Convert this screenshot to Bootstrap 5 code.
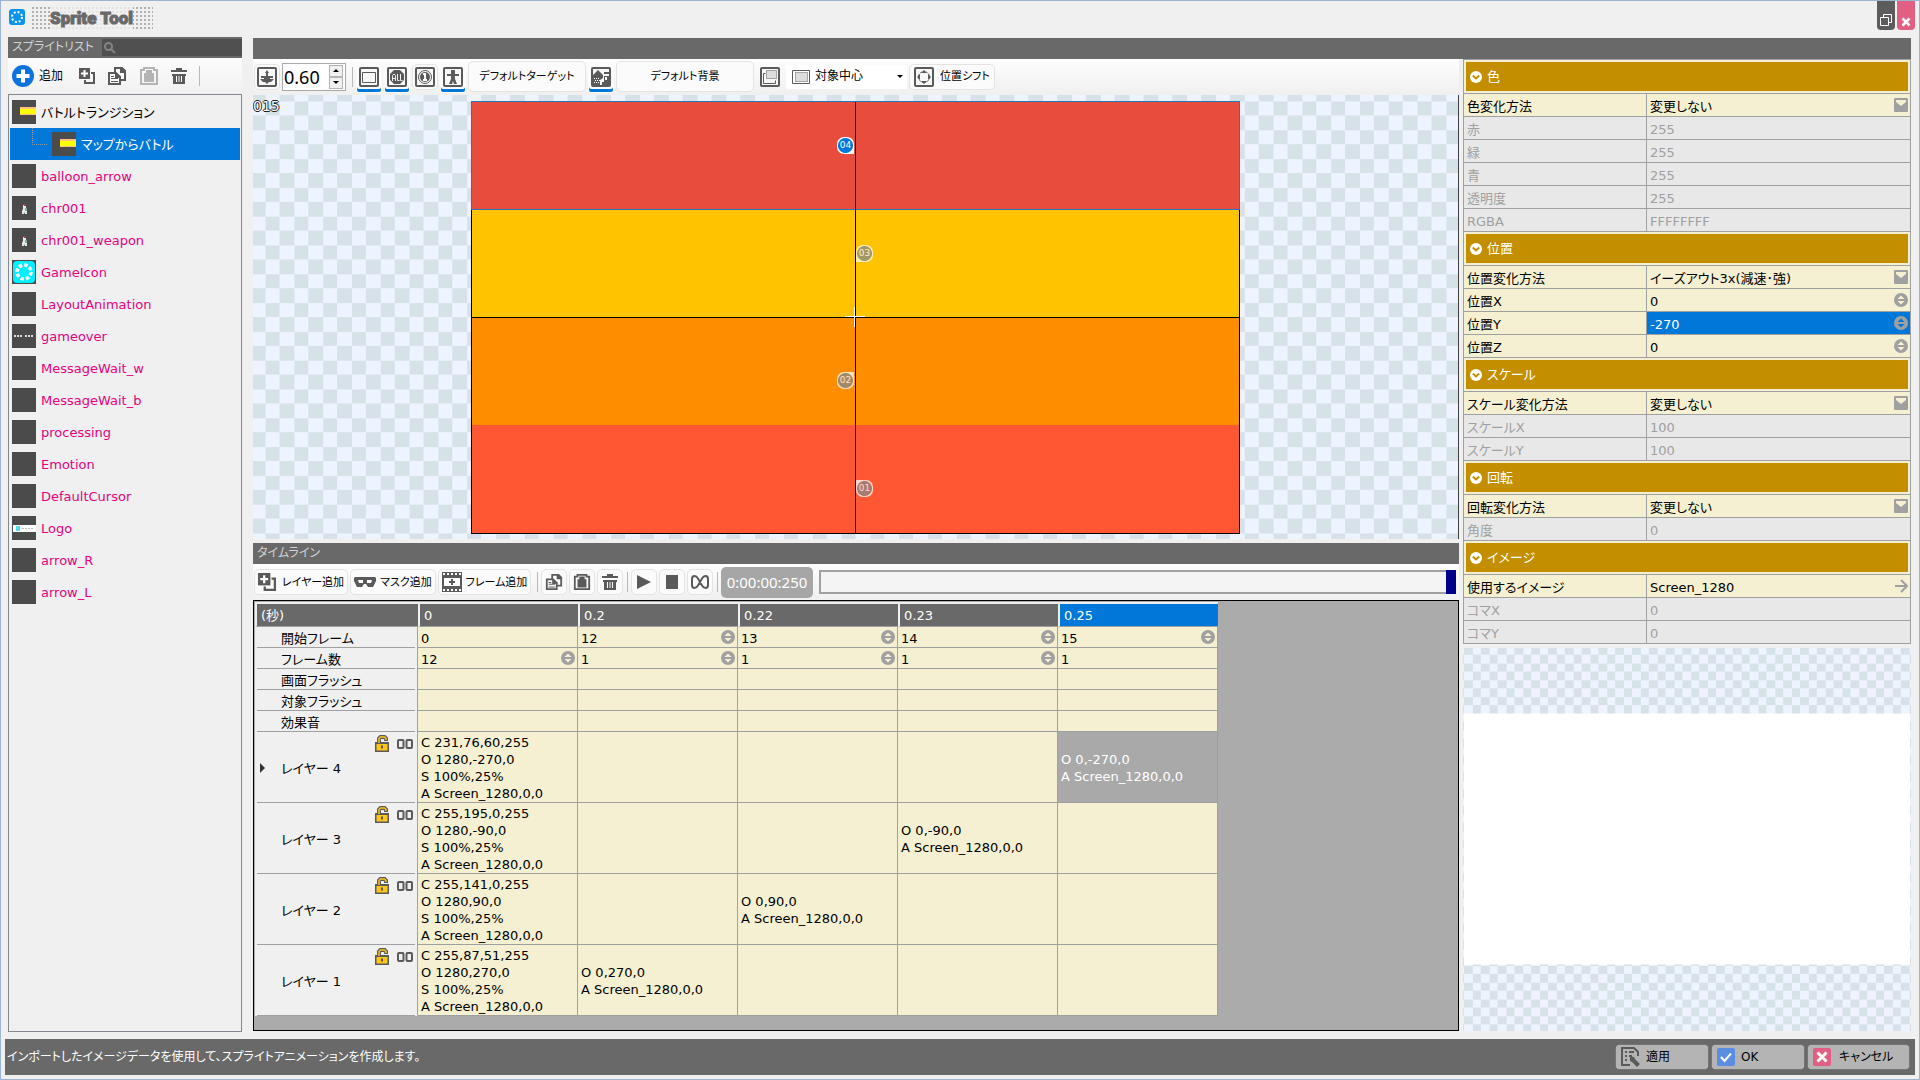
<!DOCTYPE html>
<html lang="ja">
<head>
<meta charset="utf-8">
<meta name="viewport" content="width=device-width, initial-scale=1">
<title>Sprite Tool</title>
<link href="https://cdn.jsdelivr.net/npm/bootstrap@5.3.0/dist/css/bootstrap.min.css" rel="stylesheet">
<style>
:root{--ink:#5a5a5a;--bar:#696969;--line:#a0a0a0;--cream:#f5f0d2;--sel:#0078d9;--gold:#c38f00;--pane:#f0f0f0}
body{background:var(--pane);color:#000;font-family:"DejaVu Sans","Noto Sans CJK JP",sans-serif;font-size:13px;line-height:17px;font-feature-settings:"palt"}
svg{display:block;flex:none}
button,input,select{font:inherit;color:inherit;font-feature-settings:inherit}
.app-window{border:1px solid #9ab4d2;height:100vh;min-height:900px}
.title-bar{height:36px;padding:0 4px 0 8px}
.app-logo{margin-top:8px}
.title-dots{height:23px;width:123px;margin:6px 0 0 5px;background:conic-gradient(#b0b0b0 25%,transparent 0) 0 0/4px 4px}
.title-text{font:900 17px/23px Roboto,sans-serif;color:var(--bar);margin:0;-webkit-text-stroke:1px var(--bar);background:rgba(240,240,240,.8);height:23px}
.win-btn{width:18px;height:29px;border:0;border-radius:0 0 4px 4px;padding:0}
.win-restore{background:#5c5c5c;margin-right:2px}
.win-close{background:#e05f83}
.work-area{padding:0 8px 7px 7px;gap:11px;min-height:0}
.side-panel{width:234px;flex:none}
.main-col{min-width:0;padding:1px 0}
.bar-strip{background:var(--bar);color:#d2d2d2;height:21px;flex:none;padding-left:4px;font-size:12px}
.search-box{background:#505050;height:17px;width:140px;padding-left:2px}
.search-box input{background:none;border:0;min-width:0;outline:0}
.tool-strip{background:linear-gradient(#fdfdfd,#f0f0f0);flex:none;gap:2px;padding-left:1px;height:36px}
.tool-btn{border:1px solid #e4e4e4;border-radius:5px;background:#fbfbfb;padding:0;height:26px;min-width:26px;color:#000;display:flex;align-items:center;justify-content:center;gap:6px;font-size:11px;white-space:nowrap}
.tool-btn:hover{background:#eef4fb}
.tool-on{box-shadow:inset 0 -3px 0 var(--sel);border-radius:3px;border-color:transparent;height:29px;padding-bottom:3px;margin-top:3px}
.tool-label{height:31px}
.flat-btn{border:0;background:none;padding:0;display:flex;align-items:center;gap:5px;font-size:12px}
.v-rule{width:1px;height:20px;background:#b8b8b8;flex:none;margin:0 1px 0 2px}
.sprite-list{border:1px solid #828790;padding:1px;margin:0;list-style:none;overflow:auto}
.sprite-list a{display:flex;align-items:center;height:32px;padding:0 0 0 2px;gap:5px;color:#e6007e;text-decoration:none}
.sprite-list a.plain{color:#000}
.sprite-list a.picked{background:var(--sel);color:#fff}
.thumb{width:24px;height:24px;background:#4b4b4b;flex:none}
.zoom-field{width:64px;height:28px;border:1px solid #a8a8a8;background:#fff;margin-right:2px}
.zoom-field input{border:0;outline:0;width:46px;padding:0 0 0 1px;font:18px/22px "Noto Sans",sans-serif}
.spin-stack button{width:14px;height:12px;border:1px solid #b4b4b4;background:#efefef;padding:0;display:flex;align-items:center;justify-content:center}
.anchor-pick{width:121px;height:24px;padding:0 4px 0 6px;gap:5px;font-size:12px}
.anchor-pick select{appearance:none}
.canvas-area{height:444px;flex:none;border-right:1px solid #404040;margin-top:1px;overflow:hidden;padding-top:6px}
.backdrop{position:absolute;left:0;top:0;width:100%;height:100%}
.stage{position:relative;width:769px;height:433px;border:1px solid #000;border-top:0}
.band{flex:1 1 0}
.band-4{background:#e74c3c;outline:1px solid #1f78c0;flex:0 0 107px;margin-top:1px;position:relative}
.band-3{background:#ffc300}.band-2{background:#ff8d00}.band-1{background:#ff5733}
.axis-v{position:absolute;left:383px;top:1px;bottom:0;width:1px;background:#000}
.axis-h{position:absolute;top:216px;left:0;right:0;height:1px;background:#000}
.origin{position:absolute;left:373px;top:206px}
.pin{position:absolute;width:17px;height:17px;border-radius:7px;background:radial-gradient(circle,var(--sel) 7px,#fff 8px);color:#fff;font-size:9px;line-height:17px;text-align:center}
.pin-l{left:365px}.pin-r{left:384px}
.pin-off{background:radial-gradient(circle,#888 7px,#fff 8px);opacity:.75}
.frame-no{position:absolute;left:0;top:2px;color:#fff;font-size:14px;line-height:18px;text-shadow:1px 0 #222,-1px 0 #222,0 1px #222,0 -1px #222}
.time-box{background:#a6a6a6;color:#fff;border-radius:5px;height:31px;width:92px;font:15px/31px "Noto Sans",sans-serif;text-align:center;flex:none}
.seek{appearance:none;-webkit-appearance:none;height:24px;background:#f4f4f4;box-shadow:inset 0 0 0 2px var(--line);margin:0 3px 0 4px;min-width:0}
.seek::-webkit-slider-thumb{-webkit-appearance:none;width:10px;height:24px;background:#00008b}
.grid-pane{border:1px solid #000;background:#ababab;overflow:auto;min-height:0;padding:1px 0 0 1px}
.frame-table{table-layout:fixed;border-collapse:separate;border-spacing:0;width:963px;background:var(--cream)}
.frame-table col.names{width:163px}
.frame-table thead th{background:var(--bar);color:#fff;font-weight:400;height:25px;border-left:2px solid #f0f0f0;border-bottom:1px solid var(--line);border-top:2px solid #f0f0f0;padding:0 0 0 4px}
.frame-table thead th.now{background:var(--sel)}
.frame-table tbody th{background:var(--pane);font-weight:400;padding:0 2px 0 2px;border-right:1px solid var(--line)}
.frame-table tbody th>div{border-bottom:1px solid var(--line);padding-left:24px;height:21px;line-height:23px}
.frame-table tbody td{border-right:1px solid var(--line);border-bottom:1px solid var(--line);padding:0 2px 0 3px;height:21px}
.frame-table input{border:0;background:none;outline:0;padding:2px 0 0;min-width:0;height:20px}
.frame-table .layer-row td{height:71px;white-space:nowrap;padding-top:2px}
.frame-table .layer-row th>div{height:71px;line-height:73px;position:relative}
.frame-table td.now{background:#a9a9a9;color:#fff}
.layer-tools{position:absolute;right:2px;top:3px}
.row-mark{position:absolute;left:3px;top:31px}
.prop-panel{width:448px;flex:none}
.prop-grid{border:1px solid var(--line);background:var(--cream);border-bottom:0;margin-bottom:4px}
.prop-head{border:2px solid var(--cream);background:var(--gold);color:#fff;width:100%;height:33px;padding:0 0 0 4px;display:flex;align-items:center;gap:5px}
.prop-box{border-bottom:1px solid var(--line)}
.prop-row{display:flex;height:23px;border-bottom:1px solid var(--line)}
.prop-row label{width:183px;border-right:1px solid var(--line);padding:2px 0 0 3px;line-height:21px;flex:none}
.prop-val{display:flex;flex:1;align-items:center;padding:0 2px 0 3px;min-width:0}
.prop-val input,.prop-val select{border:0;background:none;appearance:none;-webkit-appearance:none;outline:0;padding:2px 0 0;flex:1;min-width:0;height:22px}
.prop-off{background:#e8e8e8;color:#a0a0a0}
.prop-val input:disabled{color:#a0a0a0}
.prop-sel{background:var(--sel);color:#fff}
.status-bar{background:var(--bar);color:#fff;margin:0 4px 4px;height:36px;flex:none;font-size:12px;padding:0 6px 0 2px;gap:4px}
.act-btn{height:24px;width:92px;border:0;border-radius:4px;background:#b4b4b4;color:#000;display:flex;align-items:center;padding:0 5px;gap:6px;box-shadow:0 0 1px #ddd}
.act-wide{width:101px;gap:8px}
</style>
</head>
<body>
<svg width="0" height="0" class="position-absolute" aria-hidden="true">
<defs>
<pattern id="checkBig" width="48" height="48" patternUnits="userSpaceOnUse" patternTransform="scale(.6)" shape-rendering="crispEdges"><rect width="48" height="48" fill="#eef4ff"/><path fill="#d6e1e8" d="M0 0h24v24H0zM24 24h24v24H24z"/></pattern>
<pattern id="checkSmall" width="48" height="48" patternUnits="userSpaceOnUse" patternTransform="scale(.35)" shape-rendering="crispEdges"><rect width="48" height="48" fill="#eef4ff"/><path fill="#d6e1e8" d="M24 0h24v24H24zM0 24h24v24H0z"/></pattern>
<symbol id="i-copyadd" viewBox="0 0 16 16"><path fill="#5a5a5a" d="M0 0h11v11H0z"/><path fill="#fff" d="M4.500 2h2v2.500H9v2H6.500V9h-2V6.500H2v-2h2.500z"/><path fill="#5a5a5a" d="M12 4h4v12H5v-4h2v2h7V6h-2z"/></symbol>
<symbol id="i-copy" viewBox="0 0 20 20"><path fill="#fbfbfb" stroke="#5a5a5a" stroke-width="2" d="M8 8V2h7l3 3v9h-5"/><path fill="#5a5a5a" d="M13 1h2l4 4v2h-6z"/><path fill="#fbfbfb" stroke="#5a5a5a" stroke-width="2" d="M2 7h7l4 4v7H2z"/><path fill="#5a5a5a" d="M8 6l6 5v1H8zM4 10h3v1H4zM4 12h7v1H4zM4 15h7v1H4z"/></symbol>
<symbol id="i-paste" viewBox="0 0 20 20"><path fill="none" stroke="currentColor" stroke-width="2" d="M2 4h3V2h10v2h3v14H2z"/><path fill="currentColor" d="M5 7h2V4h6v3h2v9H5z"/></symbol>
<symbol id="i-trash" viewBox="0 0 16 16"><path fill="#5a5a5a" d="M5 0h6v2h5v2H0V2h5zM1 6h14v2h-1v8H2V8H1z"/><path stroke="#fbfbfb" d="M5.500 8v6M8 8v6M10.500 8v6"/></symbol>
<symbol id="i-frame" viewBox="0 0 20 20"><rect x="1" y="1" width="18" height="18" rx="1" fill="#f8f8f8" stroke="#5a5a5a" stroke-width="2"/></symbol>
<symbol id="i-spin" viewBox="0 0 14 14"><circle cx="7" cy="7" r="7" fill="#a0a0a0"/><path fill="#f5f0d2" d="M7 2.500L10.500 6h-7zM3.500 8h7L7 11.500z"/></symbol>
<symbol id="i-spin-sel" viewBox="0 0 14 14"><circle cx="7" cy="7" r="7" fill="#a0a0a0"/><path fill="#0078d9" d="M7 2.500L10.500 6h-7zM3.500 8h7L7 11.500z"/></symbol>
<symbol id="i-drop" viewBox="0 0 14 14"><rect width="14" height="14" rx="1" fill="#a0a0a0"/><path fill="#f5f0d2" d="M2 2h10v2L7 8 2 4z"/></symbol>
<symbol id="i-fold" viewBox="0 0 12 12"><circle cx="6" cy="6" r="6" fill="#fff"/><path d="M2.800 4.500L6 7.500l3.200-3" fill="none" stroke="#c38f00" stroke-width="2"/></symbol>
<symbol id="i-lock" viewBox="0 0 14 17"><path fill="none" stroke="#5a5a5a" stroke-width="4" d="M4 9V3.500L5.500 2h4L11 3.500V6"/><path fill="#5a5a5a" d="M0 7h14v10H0z"/><path fill="none" stroke="#ffc51c" stroke-width="1.500" d="M4 8V3.500L5.500 2h4L11 3.500V5"/><path fill="#ffc51c" d="M1.500 9h11v6.500h-11z"/><path fill="#5a5a5a" d="M6 10.500h2v3H6z"/></symbol>
<symbol id="i-link" viewBox="0 0 16 10"><rect x="1" y="1" width="5.500" height="8" rx="1" fill="none" stroke="#5a5a5a" stroke-width="2"/><rect x="9.500" y="1" width="5.500" height="8" rx="1" fill="none" stroke="#5a5a5a" stroke-width="2"/><path fill="#f0f0f0" d="M3 4h1v2H3zM11 4h1v2h-1z"/></symbol>
<symbol id="i-mini" viewBox="0 0 24 24"><path fill="#ffc080" d="M8 7h16v8H8z"/><path fill="#ff0" d="M8 9h16v5H8z"/></symbol>
<symbol id="i-chr" viewBox="0 0 24 24"><path fill="#e8e8e8" d="M11 9h3v3l1 2v4h-2v-2l-1 2h-2v-3l1-2z"/><path fill="#a04040" d="M12 8h2v2h-2z"/><path fill="#7aa" d="M13 12h2v3h-2z"/></symbol>
</defs>
</svg>

<div class="app-window d-flex flex-column">
<header class="title-bar d-flex align-items-start">
 <svg class="app-logo" width="16" height="16" viewBox="0 0 16 16"><rect width="16" height="16" rx="3" fill="#0a94f0"/><circle cx="8" cy="8" r="5" fill="none" stroke="#fff" stroke-width="2" stroke-dasharray="2 1.920"/></svg>
 <div class="title-dots d-flex justify-content-center"><h1 class="title-text">Sprite Tool</h1></div>
 <div class="ms-auto d-flex">
  <button class="win-btn win-restore" type="button" aria-label="元に戻す"><svg width="18" height="29" viewBox="0 0 18 29" fill="none" stroke="#fff"><path d="M3.500 16.500h8v8h-8zM6.500 16.500v-3h8v8h-3"/></svg></button>
  <button class="win-btn win-close" type="button" aria-label="閉じる"><svg width="18" height="29" viewBox="0 0 18 29" fill="none" stroke="#fff" stroke-width="2.500"><path d="M5.500 17.500l7 7M12.500 17.500l-7 7"/></svg></button>
 </div>
</header>

<main class="work-area d-flex flex-grow-1">
<aside class="side-panel d-flex flex-column">
 <div class="bar-strip d-flex align-items-center justify-content-between pe-0"><span>スプライトリスト</span>
  <div class="search-box d-flex align-items-center"><svg width="12" height="12" viewBox="0 0 12 12" fill="none" stroke="#858585" stroke-width="2"><circle cx="4.500" cy="4.500" r="3.500"/><path d="M7 7l4 4"/></svg><input type="search" aria-label="検索"></div></div>
 <div class="tool-strip d-flex align-items-center ps-1 gap-0">
  <button class="flat-btn me-3" type="button"><svg width="22" height="22" viewBox="0 0 22 22"><circle cx="11" cy="11" r="11" fill="#0e72df"/><path stroke="#fff" stroke-width="4" d="M11 4.500v13M4.500 11h13"/></svg>追加</button>
  <div class="d-flex align-items-center" style="gap:12px">
  <button class="flat-btn" type="button" aria-label="複製"><svg width="16" height="16"><use href="#i-copyadd"/></svg></button>
  <button class="flat-btn" type="button" aria-label="コピー"><svg width="20" height="20"><use href="#i-copy"/></svg></button>
  <button class="flat-btn" type="button" aria-label="貼り付け" style="color:#b4b4b4"><svg width="20" height="20"><use href="#i-paste"/></svg></button>
  <button class="flat-btn" type="button" aria-label="削除"><svg width="16" height="16"><use href="#i-trash"/></svg></button>
  <span class="v-rule ms-0"></span>
  </div>
 </div>
 <ul class="sprite-list flex-grow-1">
  <li><a href="#" class="plain"><svg class="thumb"><use href="#i-mini"/></svg>バトルトランジション</a></li>
  <li><a href="#" class="picked"><svg width="35" height="32" viewBox="0 0 35 32" fill="none" stroke="#9a9a9a" stroke-dasharray="1 1"><path d="M20.500 0v16.500H35"/></svg><svg class="thumb"><use href="#i-mini"/></svg>マップからバトル</a></li>
  <li><a href="#"><span class="thumb"></span>balloon_arrow</a></li>
  <li><a href="#"><svg class="thumb"><use href="#i-chr"/></svg>chr001</a></li>
  <li><a href="#"><svg class="thumb"><use href="#i-chr"/></svg>chr001_weapon</a></li>
  <li><a href="#"><svg class="thumb" viewBox="0 0 24 24"><rect x="1" y="1" width="22" height="22" rx="4" fill="#00f0ff"/><circle cx="12" cy="12" r="7" fill="none" stroke="#fff" stroke-width="3.500" stroke-dasharray="3.500 2"/></svg>GameIcon</a></li>
  <li><a href="#"><span class="thumb"></span>LayoutAnimation</a></li>
  <li><a href="#"><svg class="thumb" viewBox="0 0 24 24" stroke="#ddd" stroke-width="2"><path stroke-dasharray="2 1" d="M2 12h9"/><path stroke-dasharray="2 1" d="M13 12h9"/></svg>gameover</a></li>
  <li><a href="#"><span class="thumb"></span>MessageWait_w</a></li>
  <li><a href="#"><span class="thumb"></span>MessageWait_b</a></li>
  <li><a href="#"><span class="thumb"></span>processing</a></li>
  <li><a href="#"><span class="thumb"></span>Emotion</a></li>
  <li><a href="#"><span class="thumb"></span>DefaultCursor</a></li>
  <li><a href="#"><svg class="thumb" viewBox="0 0 24 24"><path fill="#fff" d="M1 9h23v7H1z"/><path fill="#4de0e8" d="M4 10h4v5H4z"/><path stroke="#bbb" stroke-dasharray="2 1" d="M10 12.500h11"/></svg>Logo</a></li>
  <li><a href="#"><span class="thumb"></span>arrow_R</a></li>
  <li><a href="#"><span class="thumb"></span>arrow_L</a></li>
 </ul>
</aside>

<div class="main-col d-flex flex-column flex-grow-1">
<div class="bar-strip"></div>
<div class="d-flex flex-grow-1 gap-1" style="min-height:0">
<section class="d-flex flex-column flex-grow-1" style="min-width:0">
 <div class="tool-strip d-flex align-items-center" style="height:35px">
  <button class="tool-btn" type="button" aria-label="中央"><svg width="20" height="20"><use href="#i-frame"/><path fill="#5a5a5a" d="M10 3l2 3h-1v3h5v2h-3v1h4l-3 3h-2l-2 2-2-2H6l-3-3h4v-1H4V9h5V6H8z"/></svg></button>
  <div class="zoom-field d-flex align-items-center"><input type="text" value="0.60" aria-label="倍率">
   <div class="spin-stack"><button type="button" aria-label="上げる"><svg width="6" height="3" viewBox="0 0 6 3"><path d="M0 3l3-3 3 3z"/></svg></button><button type="button" aria-label="下げる"><svg width="6" height="3" viewBox="0 0 6 3"><path d="M0 0l3 3 3-3z"/></svg></button></div></div>
  <span class="v-rule"></span>
  <button class="tool-btn tool-on" type="button" aria-label="枠"><svg width="20" height="20"><use href="#i-frame"/><path fill="none" stroke="#5a5a5a" d="M3.500 5.500h13v10h-13z"/></svg></button>
  <button class="tool-btn tool-on" type="button" aria-label="すべて"><svg width="20" height="20"><use href="#i-frame"/><path fill="#5a5a5a" d="M7 3h6l4 4v6l-4 4H7l-4-4V7z"/><path fill="none" stroke="#eee" d="M5.500 14V8.500L7 7l1.500 1.500V14M5.500 11.500h3M10.500 7v6.500h2M13.500 7v6.500h2"/></svg></button>
  <button class="tool-btn" type="button" aria-label="番号"><svg width="20" height="20"><use href="#i-frame"/><circle cx="10" cy="10" r="6.500" fill="none" stroke="#5a5a5a"/><circle cx="10" cy="10" r="5" fill="#5a5a5a"/><path stroke="#fff" stroke-width="2" fill="none" d="M8 7h2v6M8 13h4"/></svg></button>
  <button class="tool-btn tool-on" type="button" aria-label="対象"><svg width="20" height="20"><use href="#i-frame"/><path fill="#5a5a5a" d="M8 3h4v4h4v2h-4v3l2 5h-3l-1-3-1 3H6l2-5V9H4V7h4z"/></svg></button>
  <button class="tool-btn tool-label" type="button" style="width:118px">デフォルトターゲット</button>
  <button class="tool-btn tool-on" type="button" aria-label="背景"><svg width="20" height="20"><use href="#i-frame"/><path fill="#5a5a5a" d="M2 8l5-5 5 5v3l-3 2v5H2zM13 5h5v2h-5zM13 9h5v9h-7v-3h2z"/><path stroke="#fff" stroke-dasharray="1 1" d="M3 11.500h5M4 13.500h5M3 15.500h5"/><path fill="#fff" d="M14 10h2v3h-2z"/></svg></button>
  <button class="tool-btn tool-label" type="button" style="width:138px">デフォルト背景</button>
  <button class="flat-btn mx-1" type="button" aria-label="基準"><svg width="20" height="20"><use href="#i-frame"/><path fill="none" stroke="#5a5a5a" d="M5.500 6.500h-2v10h12v-3"/><path fill="#ddd" stroke="#5a5a5a" stroke-dasharray="1 1" d="M6.500 3.500h10v8h-10z"/></svg></button>
  <div class="anchor-pick d-flex align-items-center bg-white"><svg width="18" height="14" viewBox="0 0 18 14"><path fill="#fff" stroke="#5a5a5a" d="M.5.500h17v13H.5z"/><path fill="#ddd" stroke="#5a5a5a" stroke-dasharray="1 1" d="M3.500 2.500h12v9h-12z"/></svg>
   <select aria-label="基準位置" class="border-0 bg-transparent flex-grow-1 p-0"><option>対象中心</option></select><svg width="6" height="3" viewBox="0 0 6 3"><path d="M0 0h6L3 3z"/></svg></div>
  <button class="tool-btn px-1" type="button"><svg width="20" height="20"><use href="#i-frame"/><path fill="#5a5a5a" d="M10 3l3 3H7zM10 17l3-3H7zM3 10l3-3v6zM17 10l-3-3v6z"/><circle cx="10" cy="10" r="5.500" fill="none" stroke="#5a5a5a" stroke-dasharray="2 1"/></svg>位置シフト</button>
 </div>

 <div class="canvas-area position-relative d-flex justify-content-center align-items-start">
  <svg class="backdrop"><svg x="50%" y="50%" overflow="visible"><rect x="-2000" y="-1000" width="4000" height="2000" fill="url(#checkBig)"/></svg></svg>
  <div class="stage d-flex flex-column">
   <div class="band band-4"></div><div class="band band-3"></div><div class="band band-2"></div><div class="band band-1"></div>
   <span class="axis-h"></span>
   <span class="axis-v"></span>
   <svg class="origin" width="20" height="20" stroke="#fff"><path d="M0 9.500h20M9.500 0v20"/></svg>
   <span class="pin pin-l" style="top:36px;border-bottom-right-radius:0">04</span>
   <span class="pin pin-r pin-off" style="top:144px;border-bottom-left-radius:0">03</span>
   <span class="pin pin-l pin-off" style="top:271px;border-top-right-radius:0">02</span>
   <span class="pin pin-r pin-off" style="top:379px;border-top-left-radius:0">01</span>
  </div>
  <span class="frame-no">015</span>
 </div>

 <div class="bar-strip mt-1 d-flex align-items-center">タイムライン</div>
 <div class="tool-strip d-flex align-items-center">
  <button class="tool-btn" type="button" style="width:94px"><svg width="18" height="18"><use href="#i-copyadd"/></svg>レイヤー追加</button>
  <button class="tool-btn" type="button" style="width:86px;gap:4px"><svg width="22" height="12" viewBox="0 0 22 12"><path fill="#5a5a5a" d="M1 1h20l1 1v3l-3 6h-5l-2-3h-2l-2 3H3L0 5V2z"/><path fill="#fff" d="M4 4h5v3H5zM13 4h5l-1 3h-4z"/></svg>マスク追加</button>
  <button class="tool-btn" type="button" style="width:93px;gap:4px"><svg width="20" height="20" viewBox="0 0 20 20"><path fill="#5a5a5a" d="M0 0h20v20H0z"/><path fill="#fff" d="M2 6h16v8H2z"/><path stroke="#fff" stroke-width="2" stroke-dasharray="2 2" d="M1 2h19M1 18h19"/><path stroke="#5a5a5a" stroke-width="2" d="M10 7v6M7 10h6"/></svg>フレーム追加</button>
  <span class="v-rule ms-1"></span>
  <button class="tool-btn" type="button" aria-label="コピー"><svg width="18" height="18"><use href="#i-copy"/></svg></button>
  <button class="tool-btn" type="button" aria-label="貼り付け" style="color:#5a5a5a"><svg width="18" height="18"><use href="#i-paste"/></svg></button>
  <button class="tool-btn" type="button" aria-label="削除"><svg width="16" height="16"><use href="#i-trash"/></svg></button>
  <span class="v-rule"></span>
  <button class="tool-btn" type="button" aria-label="再生"><svg width="14" height="14" viewBox="0 0 14 14"><path fill="#5a5a5a" d="M0 0l14 7-14 7z"/></svg></button>
  <button class="tool-btn" type="button" aria-label="停止"><svg width="12" height="14"><path fill="#5a5a5a" d="M0 0h12v14H0z"/></svg></button>
  <button class="tool-btn" type="button" aria-label="ループ"><svg width="18" height="14" viewBox="0 0 18 14" fill="none" stroke="#5a5a5a" stroke-width="2"><path d="M1 4q0-3 2.500-3Q5.500 1 7 3.500l4 7Q12.500 13 14.500 13q2.500 0 2.500-3V4q0-3-2.500-3-2 0-3.500 2.500l-4 7Q5.500 13 3.500 13 1 13 1 10z"/></svg></button>
  <span class="v-rule"></span>
  <span class="time-box">0:00:00:250</span>
  <input type="range" class="seek flex-grow-1" min="0" max="250" value="250" aria-label="再生位置">
 </div>

 <div class="grid-pane flex-grow-1">
 <table class="frame-table">
  <colgroup><col class="names"><col><col><col><col><col></colgroup>
  <thead><tr><th scope="col" class="names-head">(秒)</th><th scope="col">0</th><th scope="col">0.2</th><th scope="col">0.22</th><th scope="col">0.23</th><th scope="col" class="now">0.25</th></tr></thead>
  <tbody>
  <tr><th scope="row"><div>開始フレーム</div></th>
   <td><input class="w-100" value="0" aria-label="開始"></td>
   <td><div class="d-flex align-items-center"><input class="flex-grow-1" value="12" aria-label="開始"><svg width="14" height="14"><use href="#i-spin"/></svg></div></td>
   <td><div class="d-flex align-items-center"><input class="flex-grow-1" value="13" aria-label="開始"><svg width="14" height="14"><use href="#i-spin"/></svg></div></td>
   <td><div class="d-flex align-items-center"><input class="flex-grow-1" value="14" aria-label="開始"><svg width="14" height="14"><use href="#i-spin"/></svg></div></td>
   <td><div class="d-flex align-items-center"><input class="flex-grow-1" value="15" aria-label="開始"><svg width="14" height="14"><use href="#i-spin"/></svg></div></td></tr>
  <tr><th scope="row"><div>フレーム数</div></th>
   <td><div class="d-flex align-items-center"><input class="flex-grow-1" value="12" aria-label="フレーム数"><svg width="14" height="14"><use href="#i-spin"/></svg></div></td>
   <td><div class="d-flex align-items-center"><input class="flex-grow-1" value="1" aria-label="フレーム数"><svg width="14" height="14"><use href="#i-spin"/></svg></div></td>
   <td><div class="d-flex align-items-center"><input class="flex-grow-1" value="1" aria-label="フレーム数"><svg width="14" height="14"><use href="#i-spin"/></svg></div></td>
   <td><div class="d-flex align-items-center"><input class="flex-grow-1" value="1" aria-label="フレーム数"><svg width="14" height="14"><use href="#i-spin"/></svg></div></td>
   <td><input class="w-100" value="1" aria-label="フレーム数"></td></tr>
  <tr><th scope="row"><div>画面フラッシュ</div></th><td></td><td></td><td></td><td></td><td></td></tr>
  <tr><th scope="row"><div>対象フラッシュ</div></th><td></td><td></td><td></td><td></td><td></td></tr>
  <tr><th scope="row"><div>効果音</div></th><td></td><td></td><td></td><td></td><td></td></tr>
  <tr class="layer-row"><th scope="row"><div><svg class="row-mark" width="5" height="10"><path fill="#333" d="M0 0l5 5-5 5z"/></svg>レイヤー 4<span class="layer-tools d-flex align-items-center gap-2"><svg width="14" height="17"><use href="#i-lock"/></svg><svg width="16" height="10"><use href="#i-link"/></svg></span></div></th><td>C 231,76,60,255<br>O 1280,-270,0<br>S 100%,25%<br>A Screen_1280,0,0</td><td></td><td></td><td></td><td class="now">O 0,-270,0<br>A Screen_1280,0,0</td></tr>
  <tr class="layer-row"><th scope="row"><div>レイヤー 3<span class="layer-tools d-flex align-items-center gap-2"><svg width="14" height="17"><use href="#i-lock"/></svg><svg width="16" height="10"><use href="#i-link"/></svg></span></div></th><td>C 255,195,0,255<br>O 1280,-90,0<br>S 100%,25%<br>A Screen_1280,0,0</td><td></td><td></td><td>O 0,-90,0<br>A Screen_1280,0,0</td><td></td></tr>
  <tr class="layer-row"><th scope="row"><div>レイヤー 2<span class="layer-tools d-flex align-items-center gap-2"><svg width="14" height="17"><use href="#i-lock"/></svg><svg width="16" height="10"><use href="#i-link"/></svg></span></div></th><td>C 255,141,0,255<br>O 1280,90,0<br>S 100%,25%<br>A Screen_1280,0,0</td><td></td><td>O 0,90,0<br>A Screen_1280,0,0</td><td></td><td></td></tr>
  <tr class="layer-row"><th scope="row"><div>レイヤー 1<span class="layer-tools d-flex align-items-center gap-2"><svg width="14" height="17"><use href="#i-lock"/></svg><svg width="16" height="10"><use href="#i-link"/></svg></span></div></th><td>C 255,87,51,255<br>O 1280,270,0<br>S 100%,25%<br>A Screen_1280,0,0</td><td>O 0,270,0<br>A Screen_1280,0,0</td><td></td><td></td><td></td></tr>
  </tbody>
 </table>
 </div>
</section>

<section class="prop-panel d-flex flex-column">
 <div class="prop-grid">
  <div class="prop-box"><button class="prop-head" type="button"><svg width="12" height="12"><use href="#i-fold"/></svg>色</button></div>
  <div class="prop-row"><label for="colorMode">色変化方法</label><div class="prop-val"><select id="colorMode"><option>変更しない</option></select><svg width="14" height="14"><use href="#i-drop"/></svg></div></div>
  <div class="prop-row prop-off"><label for="cr">赤</label><div class="prop-val"><input id="cr" value="255" disabled></div></div>
  <div class="prop-row prop-off"><label for="cg">緑</label><div class="prop-val"><input id="cg" value="255" disabled></div></div>
  <div class="prop-row prop-off"><label for="cb">青</label><div class="prop-val"><input id="cb" value="255" disabled></div></div>
  <div class="prop-row prop-off"><label for="ca">透明度</label><div class="prop-val"><input id="ca" value="255" disabled></div></div>
  <div class="prop-row prop-off"><label for="rgba">RGBA</label><div class="prop-val"><input id="rgba" value="FFFFFFFF" disabled></div></div>
  <div class="prop-box"><button class="prop-head" type="button"><svg width="12" height="12"><use href="#i-fold"/></svg>位置</button></div>
  <div class="prop-row"><label for="posMode">位置変化方法</label><div class="prop-val"><select id="posMode"><option>イーズアウト3x(減速･強)</option></select><svg width="14" height="14"><use href="#i-drop"/></svg></div></div>
  <div class="prop-row"><label for="px">位置X</label><div class="prop-val"><input id="px" value="0"><svg width="14" height="14"><use href="#i-spin"/></svg></div></div>
  <div class="prop-row"><label for="py">位置Y</label><div class="prop-val prop-sel"><input id="py" value="-270"><svg width="14" height="14"><use href="#i-spin-sel"/></svg></div></div>
  <div class="prop-row"><label for="pz">位置Z</label><div class="prop-val"><input id="pz" value="0"><svg width="14" height="14"><use href="#i-spin"/></svg></div></div>
  <div class="prop-box"><button class="prop-head" type="button"><svg width="12" height="12"><use href="#i-fold"/></svg>スケール</button></div>
  <div class="prop-row"><label for="scaleMode">スケール変化方法</label><div class="prop-val"><select id="scaleMode"><option>変更しない</option></select><svg width="14" height="14"><use href="#i-drop"/></svg></div></div>
  <div class="prop-row prop-off"><label for="sx">スケールX</label><div class="prop-val"><input id="sx" value="100" disabled></div></div>
  <div class="prop-row prop-off"><label for="sy">スケールY</label><div class="prop-val"><input id="sy" value="100" disabled></div></div>
  <div class="prop-box"><button class="prop-head" type="button"><svg width="12" height="12"><use href="#i-fold"/></svg>回転</button></div>
  <div class="prop-row"><label for="rotMode">回転変化方法</label><div class="prop-val"><select id="rotMode"><option>変更しない</option></select><svg width="14" height="14"><use href="#i-drop"/></svg></div></div>
  <div class="prop-row prop-off"><label for="ang">角度</label><div class="prop-val"><input id="ang" value="0" disabled></div></div>
  <div class="prop-box"><button class="prop-head" type="button"><svg width="12" height="12"><use href="#i-fold"/></svg>イメージ</button></div>
  <div class="prop-row"><label for="img">使用するイメージ</label><div class="prop-val"><input id="img" value="Screen_1280"><svg width="14" height="14" viewBox="0 0 14 14" fill="none" stroke="#a0a0a0" stroke-width="2"><path d="M1 7h11M7 1l6 6-6 6"/></svg></div></div>
  <div class="prop-row prop-off"><label for="kx">コマX</label><div class="prop-val"><input id="kx" value="0" disabled></div></div>
  <div class="prop-row prop-off"><label for="ky">コマY</label><div class="prop-val"><input id="ky" value="0" disabled></div></div>
 </div>
 <div class="position-relative flex-grow-1">
  <svg class="backdrop"><svg x="1" y="50%" overflow="visible"><rect x="-1000" y="-1000" width="2000" height="2000" fill="url(#checkSmall)"/></svg><svg x="50%" y="50%" overflow="visible"><rect x="-223" y="-126" width="446" height="251" fill="#fff"/></svg></svg>
 </div>
</section>
</div>
</div>
</main>

<footer class="status-bar d-flex align-items-center">
 <span class="me-auto">インポートしたイメージデータを使用して、スプライトアニメーションを作成します。</span>
 <button class="act-btn" type="button"><svg width="19" height="20" viewBox="0 0 19 20"><path fill="none" stroke="#5a5a5a" stroke-width="2" d="M9 18H1V1h12l4 4v4"/><path fill="#5a5a5a" d="M4 4h2v2H4zM8 4h5v2H8zM4 8h2v2H4zM8 8h3v2H8zM4 12h2v2H4zM9 9l4 1 1 2 5 5-3 3-5-5-2-1z"/></svg>適用</button>
 <button class="act-btn" type="button"><svg width="18" height="18" viewBox="0 0 18 18"><rect width="18" height="18" rx="2" fill="#5b8de3"/><path d="M4 9l3.500 4L14 5.500" fill="none" stroke="#fff" stroke-width="2"/></svg>OK</button>
 <button class="act-btn act-wide" type="button"><svg width="18" height="18" viewBox="0 0 18 18"><rect width="18" height="18" rx="2" fill="#e05f83"/><path d="M4.500 4.500l9 9M13.500 4.500l-9 9" stroke="#fff" stroke-width="3"/></svg>キャンセル</button>
</footer>
</div>
<script src="https://cdn.jsdelivr.net/npm/bootstrap@5.3.0/dist/js/bootstrap.bundle.min.js"></script>
</body>
</html>
